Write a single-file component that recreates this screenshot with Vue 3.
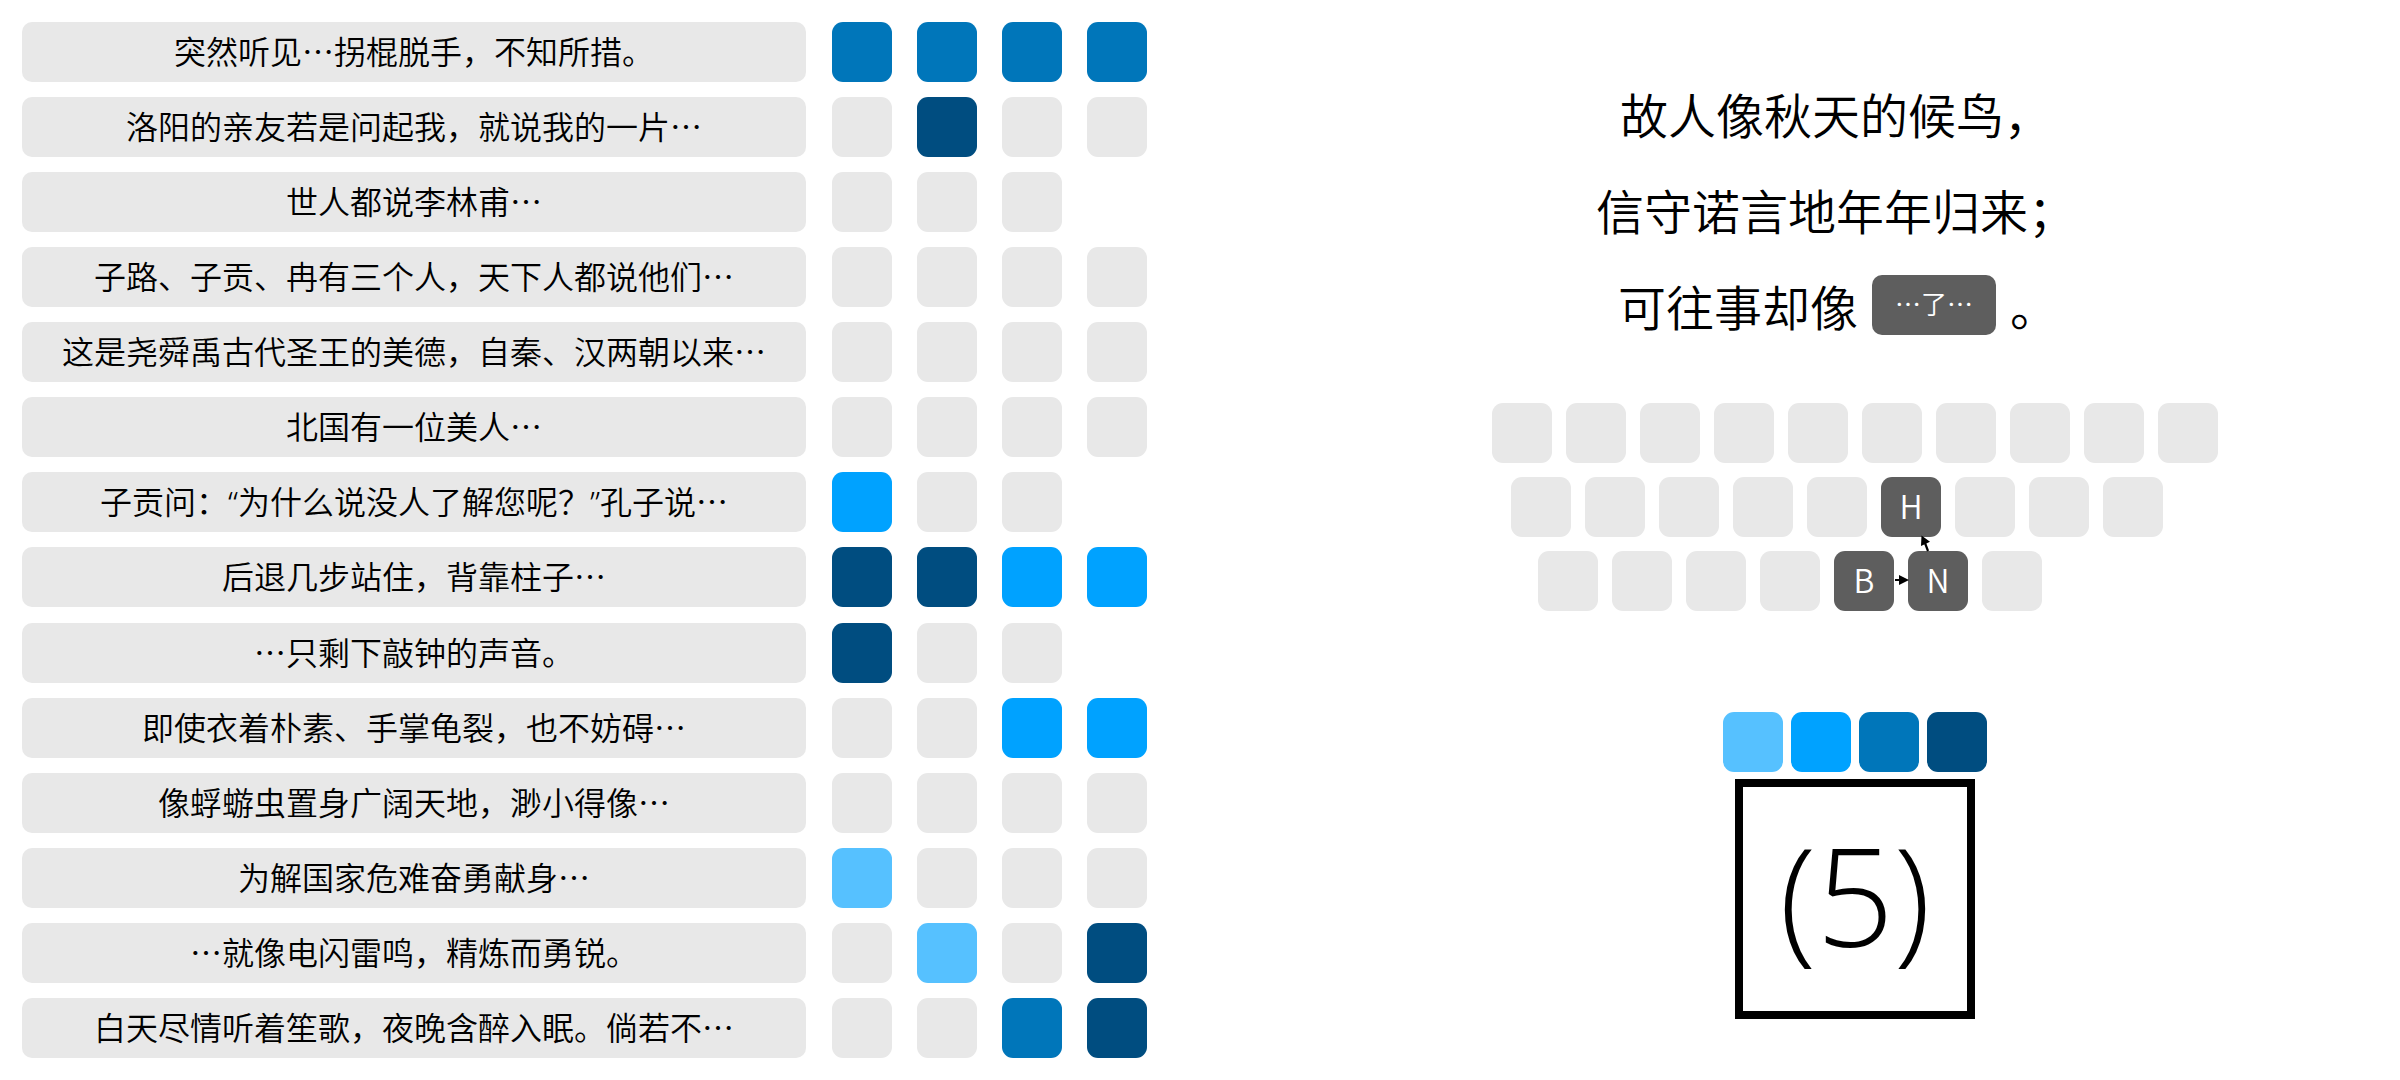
<script setup>
const clue = (text, marks) => ({
  parts: text.split(/([“”])/).filter(Boolean),
  marks: [...marks],
})

// marks: s = sky, b = bright, m = medium, n = navy, - = empty
const clues = [
  clue('突然听见…拐棍脱手，不知所措。', 'mmmm'),
  clue('洛阳的亲友若是问起我，就说我的一片…', '-n--'),
  clue('世人都说李林甫…', '---'),
  clue('子路、子贡、冉有三个人，天下人都说他们…', '----'),
  clue('这是尧舜禹古代圣王的美德，自秦、汉两朝以来…', '----'),
  clue('北国有一位美人…', '----'),
  clue('子贡问：“为什么说没人了解您呢？”孔子说…', 'b--'),
  clue('后退几步站住，背靠柱子…', 'nnbb'),
  clue('…只剩下敲钟的声音。', 'n--'),
  clue('即使衣着朴素、手掌龟裂，也不妨碍…', '--bb'),
  clue('像蜉蝣虫置身广阔天地，渺小得像…', '----'),
  clue('为解国家危难奋勇献身…', 's---'),
  clue('…就像电闪雷鸣，精炼而勇锐。', '-s-n'),
  clue('白天尽情听着笙歌，夜晚含醉入眠。倘若不…', '--mn'),
]

const tones = { s: 'sky', b: 'bright', m: 'medium', n: 'navy', '-': 'empty' }
const legend = ['sky', 'bright', 'medium', 'navy']

const keyRows = [
  { name: 'top', keys: Array(10).fill('') },
  { name: 'home', keys: ['', '', '', '', '', 'H', '', '', ''] },
  { name: 'bottom', keys: ['', '', '', '', 'B', 'N', ''] },
]
</script>

<template>
  <main class="puzzle" lang="zh-CN">
    <ol class="clues">
      <li v-for="(row, i) in clues" :key="i" class="clue">
        <p class="pill"><span v-for="(part, p) in row.parts" :key="p" :class="{ quote: /[“”]/.test(part) }">{{ part }}</span></p>
        <div class="marks">
          <span v-for="(m, j) in row.marks" :key="j" class="tile" :class="tones[m]"></span>
        </div>
      </li>
    </ol>

    <section class="board">
      <div class="poem">
        <p>故人像秋天的候鸟，</p>
        <p>信守诺言地年年归来；</p>
        <p class="blank-line"><span>可往事却像</span><span class="chip">…了…</span><span>。</span></p>
      </div>

      <div class="keyboard">
        <div v-for="row in keyRows" :key="row.name" class="key-row" :class="row.name">
          <span v-for="(k, i) in row.keys" :key="i" class="tile" :class="k ? 'pressed' : 'empty'">{{ k }}</span>
        </div>
        <svg class="arrows" width="726" height="208" viewBox="0 0 726 208" aria-hidden="true">
          <path d="M403 177H409M436 148L433 140" stroke="#000" stroke-width="2.2" />
          <path d="M407 172L417 177L407 182ZM429.5 132.500L438 138.800L429 143Z" />
        </svg>
      </div>

      <div class="answer">
        <div class="legend">
          <span v-for="t in legend" :key="t" class="tile" :class="t"></span>
        </div>
        <div class="count">(5)</div>
      </div>
    </section>
  </main>
</template>

<style>
body {
  margin: 0;
  background: #fff;
}
</style>

<style scoped>
.puzzle {
  box-sizing: border-box;
  display: grid;
  grid-template-columns: 1310fr 1090fr;
  min-height: 100vh;
  color: #000;
  font-family: "Noto Sans CJK SC", sans-serif;
  font-weight: 350;
}
p,
ol {
  margin: 0;
  padding: 0;
}
.clues {
  box-sizing: border-box;
  display: flex;
  flex-direction: column;
  justify-content: space-between;
  gap: 14px;
  padding: 22px 162px 22px 22px;
  list-style: none;
}
.clue {
  display: flex;
  gap: 26px;
}
.pill {
  flex: 1;
  height: 60px;
  border-radius: 10px;
  background: #e8e8e8;
  font-size: 32px;
  line-height: 56px;
  text-align: center;
  white-space: nowrap;
}
.quote {
  font-family: "Noto Sans", sans-serif;
}
.marks {
  display: flex;
  gap: 25px;
  width: 316px;
}
.tile {
  flex: none;
  width: 60px;
  height: 60px;
  border-radius: 11px;
}
.empty {
  background: #e8e8e8;
}
.sky {
  background: #56c1ff;
}
.bright {
  background: #00a2ff;
}
.medium {
  background: #0076ba;
}
.navy {
  background: #004d80;
}
.pressed {
  background: #5e5e5e;
  color: #fff;
  font-size: 32px;
  line-height: 56px;
  text-align: center;
}
.board {
  display: flex;
  flex-direction: column;
  align-items: center;
  padding-top: 65px;
}
.poem {
  padding-right: 38px;
  font-size: 48px;
  line-height: 96px;
  text-align: center;
}
.blank-line {
  display: flex;
  align-items: center;
  justify-content: center;
  gap: 14px;
  padding-left: 4px;
}
.chip {
  width: 124px;
  height: 60px;
  border-radius: 10px;
  background: #5e5e5e;
  color: #fff;
  font-size: 26px;
  line-height: 56px;
}
.keyboard {
  position: relative;
  display: flex;
  flex-direction: column;
  gap: 14px;
  width: 726px;
  margin-top: 50px;
}
.key-row {
  display: flex;
  gap: 14px;
}
.home {
  padding-left: 19px;
}
.bottom {
  padding-left: 46px;
}
.arrows {
  position: absolute;
  inset: 0;
}
.answer {
  display: flex;
  flex-direction: column;
  align-items: center;
  gap: 7px;
  margin-top: 101px;
}
.legend {
  display: flex;
  gap: 8px;
}
.count {
  box-sizing: border-box;
  width: 240px;
  height: 240px;
  border: 8px solid #000;
  font-family: "Open Sans", sans-serif;
  font-size: 136px;
  line-height: 216px;
  text-align: center;
}
</style>
